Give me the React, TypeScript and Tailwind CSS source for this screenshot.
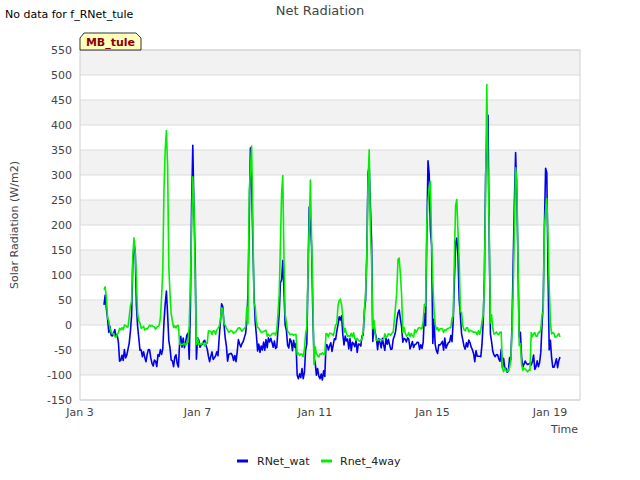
const L = 80, R = 580, T = 50, B = 400
const yv = (v: number) => T + (550 - v) / 2
const xd = (d: number) => L + (d - 3) * (470 / 16)

// [center x, blue peak, green peak, blue night, green night]
const days: [number, number, number, number, number][] = [
  [105, 60, 85, -20, -20], [134, 210, 200, -60, -5], [166, 80, 405, -70, -5],
  [193, 385, 360, -35, -40], [222, 45, 40, -60, -15], [251, 445, 420, -40, -10],
  [282, 150, 335, -40, -20], [310, 300, 300, -100, -60], [340, 20, 70, -40, -20],
  [369, 370, 355, -40, -30], [399, 30, 170, -40, -20], [429, 370, 355, -45, -10],
  [457, 240, 295, -40, -10], [487, 530, 520, -60, -15], [516, 425, 390, -80, -90],
  [546, 455, 320, -75, -20],
]

function rnd(i: number) {
  const s = Math.sin(i * 12.9898) * 43758.5453
  return s - Math.floor(s)
}

function series(bi: 3 | 4, pi: 1 | 2, seed: number) {
  const pts: string[] = []
  for (let x = 104; x <= 560; x += 1.2) {
    let best = days[0]
    for (const d of days) if (Math.abs(d[0] - x) < Math.abs(best[0] - x)) best = d
    const night = best[bi]
    const peak = best[pi]
    const w = 2.4 + rnd(best[0]) * 1.2
    let v = night + (peak - night) * Math.exp(-(((x - best[0]) / w) ** 2))
    v += (rnd(x * 7 + seed) - 0.5) * (bi === 3 ? 30 : 10)
    if (Math.abs(x - best[0]) < 4) v -= rnd(x + seed * 3) * peak * 0.3
    v = Math.min(v, peak)
    pts.push(`${x.toFixed(1)},${yv(v).toFixed(1)}`)
  }
  return pts.join(' ')
}

const bands = [550, 450, 350, 250, 150, 50, -50]
const ticks = [550, 500, 450, 400, 350, 300, 250, 200, 150, 100, 50, 0, -50, -100, -150]

export default function App() {
  const font = { fontFamily: '"DejaVu Sans", sans-serif' }
  return (
    <div className="w-[640px] h-[480px] bg-white" style={font}>
      <svg width="640" height="480" className="block">
        <text x="5" y="18" fontSize="11" fill="#000">No data for f_RNet_tule</text>
        <text x="320" y="15" fontSize="13" fill="#444" textAnchor="middle">Net Radiation</text>
        {bands.map(b => (
          <rect key={b} x={L} y={yv(b)} width={R - L} height={25} fill="#f2f2f2" />
        ))}
        {ticks.map(t => (
          <g key={t}>
            <line x1={L} x2={R} y1={yv(t)} y2={yv(t)} stroke="#dcdcdc" />
            <text x={L - 8} y={yv(t) + 4} fontSize="11" fill="#444" textAnchor="end">{t}</text>
          </g>
        ))}
        <rect x={L} y={T} width={R - L} height={B - T} fill="none" stroke="#d0d0d0" />
        {[3, 7, 11, 15, 19].map(d => (
          <text key={d} x={xd(d)} y={416} fontSize="11" fill="#444" textAnchor="middle">Jan {d}</text>
        ))}
        <text x="578" y="433" fontSize="11" fill="#444" textAnchor="end">Time</text>
        <text transform="translate(18,225) rotate(-90)" fontSize="11" fill="#444" textAnchor="middle">Solar Radiation (W/m2)</text>
        <polyline points={series(3, 1, 1)} fill="none" stroke="#0000ee" strokeWidth="1.6" strokeLinejoin="round" />
        <polyline points={series(4, 2, 2)} fill="none" stroke="#00f000" strokeWidth="1.6" strokeLinejoin="round" />
        <path d="M84,33 L136,33 L141,38 L141,50 L80,50 L80,38 Z" fill="#ffffc0" stroke="#000" strokeWidth="0.8" />
        <text x="110.5" y="46" fontSize="11" fontWeight="bold" fill="#8b0000" textAnchor="middle">MB_tule</text>
        <line x1="237" x2="248" y1="461" y2="461" stroke="#0000ee" strokeWidth="3" />
        <text x="257" y="465" fontSize="11" fill="#222">RNet_wat</text>
        <line x1="321" x2="332" y1="461" y2="461" stroke="#00f000" strokeWidth="3" />
        <text x="340" y="465" fontSize="11" fill="#222">Rnet_4way</text>
      </svg>
    </div>
  )
}
